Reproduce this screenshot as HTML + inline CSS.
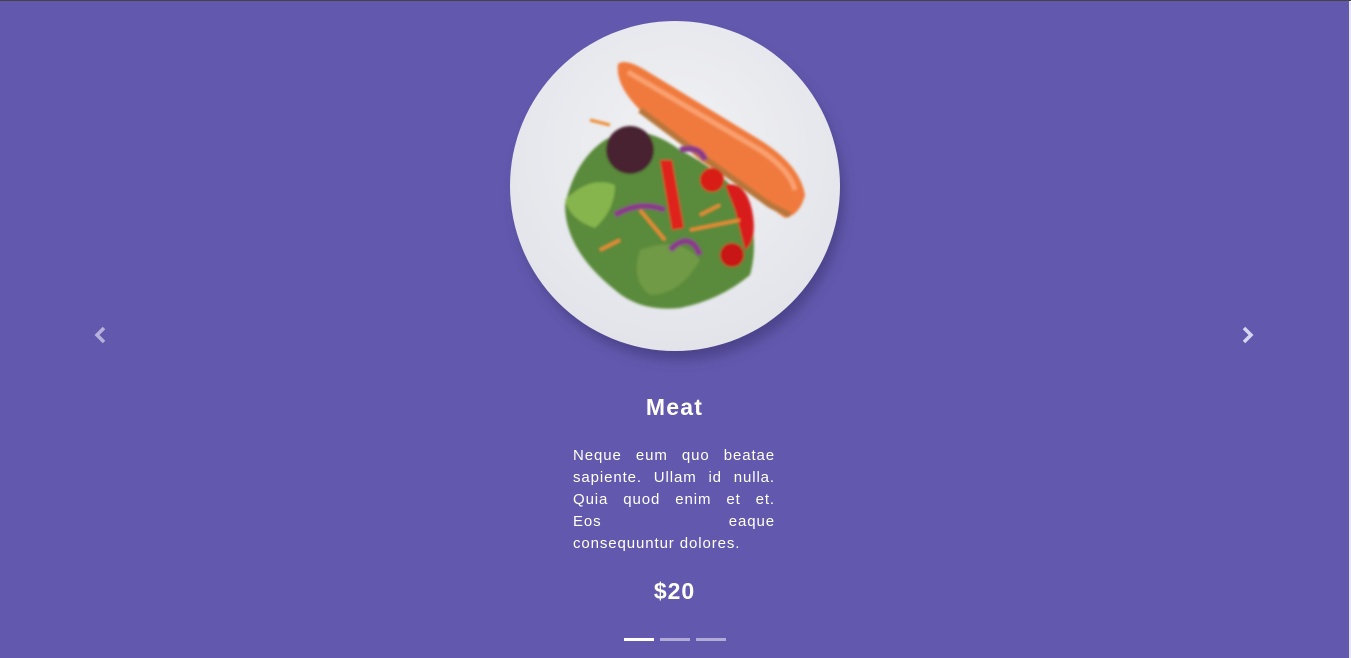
<!DOCTYPE html>
<html><head><meta charset="utf-8"><style>
html,body{margin:0;padding:0}
body{width:1351px;height:658px;background:#6259ae;position:relative;overflow:hidden;font-family:"Liberation Sans",sans-serif;color:#fff}
.top{position:absolute;left:0;top:0;width:1351px;height:1px;background:#444}
.rs{position:absolute;right:0;top:1px;width:2px;height:657px;background:#e8e6f4}
.title{position:absolute;left:0;width:1349px;top:394px;text-align:center;font-weight:bold;font-size:23px;letter-spacing:1.2px}
.para{position:absolute;left:573px;width:202px;top:445px;font-size:15px;font-weight:300;letter-spacing:0.9px;line-height:22px}
.para div{text-align:justify;text-align-last:justify;white-space:nowrap}
.para div.l{text-align-last:left}
.price{position:absolute;left:0;width:1349px;top:578px;text-align:center;font-weight:bold;font-size:23px;letter-spacing:1px}
.ind{position:absolute;top:638px;width:30px;height:3px;background:rgba(255,255,255,.5)}
</style></head><body>
<div class="top"></div><div class="rs"></div>
<svg style="position:absolute;left:0;top:0" width="1351" height="658">
<defs>
<radialGradient id="pl" cx="50%" cy="40%" r="60%"><stop offset="0" stop-color="#f2f2f4"/><stop offset="1" stop-color="#e2e4ea"/></radialGradient>
<filter id="sh" x="-20%" y="-20%" width="140%" height="140%"><feGaussianBlur stdDeviation="6"/></filter>
<filter id="bl"><feGaussianBlur stdDeviation="1.2"/></filter>
</defs>
<circle cx="680" cy="196" r="164" fill="#3a3370" opacity=".55" filter="url(#sh)"/>
<circle cx="675" cy="186" r="165" fill="url(#pl)"/>
<g filter="url(#bl)">
<path d="M618 64 Q625 58 645 70 L760 140 Q800 165 805 195 Q800 215 785 218 L760 200 L700 160 L640 110 Q615 85 618 64Z" fill="#f07a3c"/>
<path d="M628 72 L760 150 Q790 170 795 190" stroke="#f9a070" stroke-width="5" fill="none"/>
<path d="M640 110 L700 155 L770 205 L790 215" stroke="#b8763a" stroke-width="6" fill="none"/>
<path d="M565 205 Q575 160 605 140 Q640 120 680 150 Q720 170 745 200 Q760 240 750 275 Q720 300 680 308 Q640 312 615 290 Q565 250 565 205Z" fill="#5a8a3a"/>
<path d="M565 200 Q590 175 615 185 Q615 210 595 228 Q570 220 565 200Z" fill="#86b54e"/>
<path d="M640 250 Q680 235 700 260 Q680 295 650 295 Q630 280 640 250Z" fill="#6f9a45"/>
<circle cx="630" cy="150" r="24" fill="#4a2433"/>
<path d="M660 160 L672 230 L684 228 L672 160Z" fill="#e0201a"/>
<path d="M725 185 Q745 180 752 210 Q758 240 745 250 L735 210Z" fill="#d81f1f"/>
<circle cx="712" cy="180" r="12" fill="#d81a14"/>
<circle cx="732" cy="255" r="12" fill="#c81813"/>
<path d="M615 215 Q640 200 665 210 M670 250 Q690 230 700 255 M680 150 Q700 145 705 160" stroke="#8a3a8a" stroke-width="6" fill="none"/>
<path d="M640 210 L665 240 M700 215 L720 205 M690 230 L740 220 M610 125 L590 120 M620 240 L600 250" stroke="#f08a30" stroke-width="3" fill="none"/>
</g>
<path d="M104 328 L97 335 L104 342" stroke="#b7b2dc" stroke-width="3.5" fill="none"/>
<path d="M1244 328 L1251 335 L1244 342" stroke="#d8d5ee" stroke-width="3.5" fill="none"/>
</svg>
<div class="title">Meat</div>
<div class="para">
<div>Neque eum quo beatae</div>
<div>sapiente. Ullam id nulla.</div>
<div>Quia quod enim et et.</div>
<div>Eos eaque</div>
<div class="l">consequuntur dolores.</div>
</div>
<div class="price">$20</div>
<div class="ind" style="left:624px;background:#fff"></div>
<div class="ind" style="left:660px"></div>
<div class="ind" style="left:696px"></div>
</body></html>
